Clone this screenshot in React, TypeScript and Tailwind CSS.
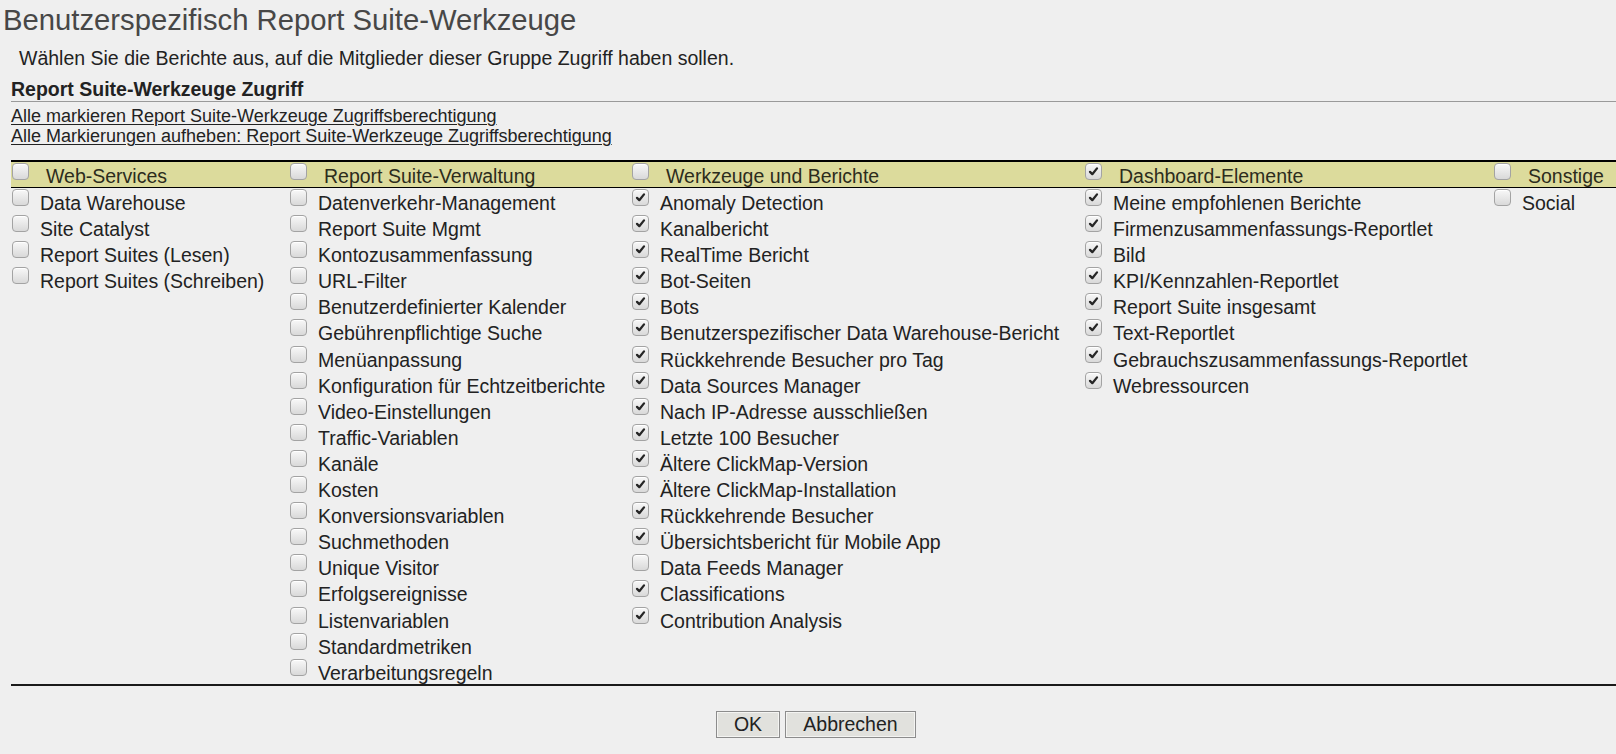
import React from "react"

type Item = { label: string; on: boolean }
type Group = { title: string; on: boolean; items: Item[] }

const un = (labels: string[]): Item[] => labels.map((label) => ({ label, on: false }))
const ck = (labels: string[]): Item[] => labels.map((label) => ({ label, on: true }))

const groups: Group[] = [
  {
    title: "Web-Services",
    on: false,
    items: un(["Data Warehouse", "Site Catalyst", "Report Suites (Lesen)", "Report Suites (Schreiben)"]),
  },
  {
    title: "Report Suite-Verwaltung",
    on: false,
    items: un([
      "Datenverkehr-Management",
      "Report Suite Mgmt",
      "Kontozusammenfassung",
      "URL-Filter",
      "Benutzerdefinierter Kalender",
      "Gebührenpflichtige Suche",
      "Menüanpassung",
      "Konfiguration für Echtzeitberichte",
      "Video-Einstellungen",
      "Traffic-Variablen",
      "Kanäle",
      "Kosten",
      "Konversionsvariablen",
      "Suchmethoden",
      "Unique Visitor",
      "Erfolgsereignisse",
      "Listenvariablen",
      "Standardmetriken",
      "Verarbeitungsregeln",
    ]),
  },
  {
    title: "Werkzeuge und Berichte",
    on: false,
    items: [
      ...ck([
        "Anomaly Detection",
        "Kanalbericht",
        "RealTime Bericht",
        "Bot-Seiten",
        "Bots",
        "Benutzerspezifischer Data Warehouse-Bericht",
        "Rückkehrende Besucher pro Tag",
        "Data Sources Manager",
        "Nach IP-Adresse ausschließen",
        "Letzte 100 Besucher",
        "Ältere ClickMap-Version",
        "Ältere ClickMap-Installation",
        "Rückkehrende Besucher",
        "Übersichtsbericht für Mobile App",
      ]),
      { label: "Data Feeds Manager", on: false },
      ...ck(["Classifications", "Contribution Analysis"]),
    ],
  },
  {
    title: "Dashboard-Elemente",
    on: true,
    items: ck([
      "Meine empfohlenen Berichte",
      "Firmenzusammenfassungs-Reportlet",
      "Bild",
      "KPI/Kennzahlen-Reportlet",
      "Report Suite insgesamt",
      "Text-Reportlet",
      "Gebrauchszusammenfassungs-Reportlet",
      "Webressourcen",
    ]),
  },
  { title: "Sonstige", on: false, items: un(["Social"]) },
]

function Box({ on }: { on: boolean }) {
  return (
    <span className="flex h-[17px] w-[17px] shrink-0 items-center justify-center rounded-[4px] border border-[#a3a3a3] bg-linear-to-b from-[#f8f8f8] to-[#d9d9d9] shadow-[inset_0_1px_0_#ffffff]">
      {on && (
        <svg viewBox="0 0 12 12" className="h-[11px] w-[11px]">
          <path
            d="M2.2 6.4 L4.7 8.9 L9.8 2.6"
            fill="none"
            stroke="#262626"
            strokeWidth="2.5"
            strokeLinecap="round"
            strokeLinejoin="round"
          />
        </svg>
      )}
    </span>
  )
}

const cols = "grid grid-cols-[278px_342px_453px_409px_1fr]"

export default function App() {
  return (
    <div className="h-[754px] w-full overflow-hidden bg-[#efefef] font-['Liberation_Sans',Arial,sans-serif] text-[19.5px] text-[#222]">
      <h1 className="pl-[3px] text-[29.25px] leading-[40px] font-normal text-[#474747] whitespace-nowrap">
        Benutzerspezifisch Report Suite-Werkzeuge
      </h1>

      <p className="mt-[6px] pl-[19px] leading-[24px] whitespace-nowrap">
        Wählen Sie die Berichte aus, auf die Mitglieder dieser Gruppe Zugriff haben sollen.
      </p>

      <div className="ml-[11px]">
        <h2 className="mt-[7px] border-b border-[#9a9a9a] leading-[24px] font-bold">
          Report Suite-Werkzeuge Zugriff
        </h2>

        <div className="mt-[3.5px] flex flex-col text-[18px] leading-[20px]">
          <a className="self-start underline decoration-1 underline-offset-2">
            Alle markieren Report Suite-Werkzeuge Zugriffsberechtigung
          </a>
          <a className="self-start underline decoration-1 underline-offset-2">
            Alle Markierungen aufheben: Report Suite-Werkzeuge Zugriffsberechtigung
          </a>
        </div>

        <div className="mt-[14.5px] w-[1700px]">
          <div className={`${cols} h-[28px] border-t-2 border-b border-black bg-[#dcdb9c] text-[#2c2c1c]`}>
            {groups.map((g) => (
              <div key={g.title} className="flex items-start pl-[1px]">
                <div className="mt-[1px]">
                  <Box on={g.on} />
                </div>
                <span className="ml-[17px] pt-[1.5px] leading-[24px] whitespace-nowrap">{g.title}</span>
              </div>
            ))}
          </div>

          <div className={`${cols} border-b-2 border-[#1a1a1a]`}>
            {groups.map((g) => (
              <div key={g.title} className="flex flex-col pl-[1px]">
                {g.items.map((it) => (
                  <div key={it.label} className="flex h-[26.1px] items-start">
                    <div className="mt-[1px]">
                      <Box on={it.on} />
                    </div>
                    <span className="ml-[11px] pt-[3px] leading-[24px] whitespace-nowrap">{it.label}</span>
                  </div>
                ))}
              </div>
            ))}
          </div>
        </div>
      </div>

      <div className="mt-[25px] flex justify-center gap-[5px] pl-[16px]">
        <button className="h-[27px] w-[64px] border border-[#8c8c8c] bg-[#e1e1dd] leading-[25px] shadow-[inset_0_0_0_1px_#f4f4f2]">
          OK
        </button>
        <button className="h-[27px] w-[131px] border border-[#8c8c8c] bg-[#e1e1dd] leading-[25px] shadow-[inset_0_0_0_1px_#f4f4f2]">
          Abbrechen
        </button>
      </div>
    </div>
  )
}
